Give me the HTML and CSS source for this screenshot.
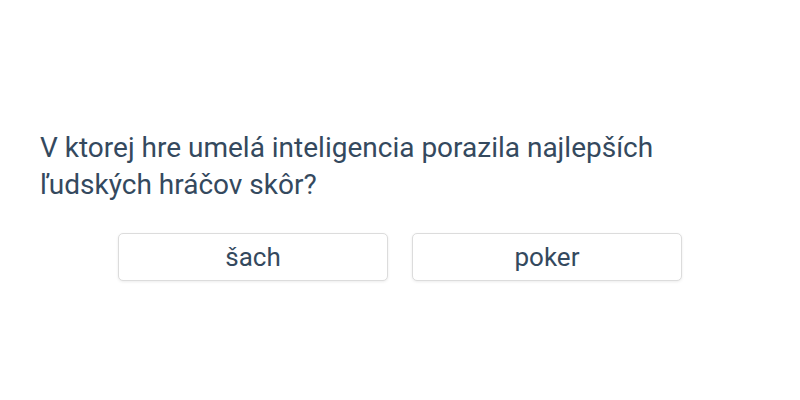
FILE: index.html
```html
<!DOCTYPE html>
<html lang="sk">

<head>
    <meta charset="UTF-8">
    <meta name="viewport" content="width=device-width, initial-scale=1.0">
    <title>Kvíz</title>

    <link rel="stylesheet" href="styles.css">
</head>

<body>

    <div class="quiz">
        <div class="question">V ktorej hre umelá inteligencia porazila najlepších ľudských hráčov skôr?</div>
        <div class="answers">
            <button class="answer">šach</button>
            <button class="answer">poker</button>
        </div>
    </div>

</body>

</html>
```

FILE: styles.css
```css
html,
body {
    margin: 0;
    height: 100%;
    background: #fff;
}

body {
    font-family: Roboto, "Noto Sans", sans-serif;
    color: #34495e;
}

.quiz {
    height: 100%;
    box-sizing: border-box;
    padding: 10px 40px 0;
    display: flex;
    flex-direction: column;
    justify-content: center;
}

.question {
    font-size: 28px;
    line-height: 37px;
    margin-bottom: 30px;
}

.answers {
    display: flex;
    justify-content: center;
    gap: 24px;
}

.answer {
    width: 270px;
    height: 48px;
    padding: 0;
    font-family: inherit;
    font-size: 26px;
    color: #34495e;
    background: #fff;
    border: 1px solid #dcdcdc;
    border-radius: 5px;
    box-shadow: 0 1px 3px rgba(0, 0, 0, 0.08);
    cursor: pointer;
}
```
